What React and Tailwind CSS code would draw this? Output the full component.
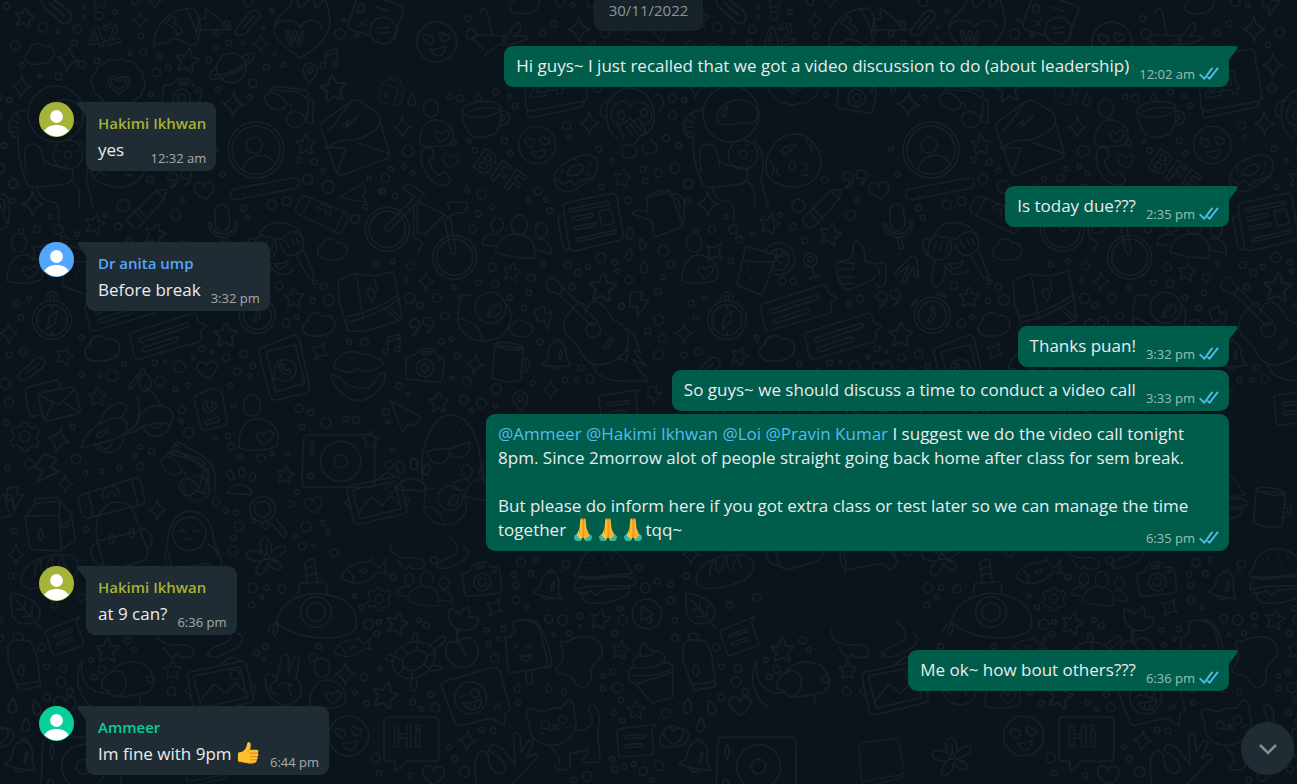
import { useState } from "react";

// line drawings of the wallpaper, each one centred on 0,0
const shapes = {
  star: "M0-30Q3-30 9-11L28-9Q31-6 14 6L18 27Q16 30 0 18L-18 28Q-21 27-14 6L-29-7Q-30-10-9-10Q-3-30 0-30Z",
  sparkle: "M0-34Q4-6 30 0Q6 5 0 34Q-5 6-30 0Q-6-5 0-34Z",
  heart: "M2 26C-40 4-34-26-14-26C-6-26-1-19 0-12C4-24 14-27 22-23C40-12 24 14 2 26Z",
  cloud: "M-26 30C-52 26-52-4-34-8C-34-34 0-40 8-22C32-32 48-6 38 8C34 28-6 34-26 30Z",
  drop: "M2-20Q16 0 10 12Q0 22-9 12Q-12 0 2-20Z",
  quotes: "M-28 22Q-12 12-14 0Q-34 4-36-12Q-32-26-18-24Q-2-20-4-2Q-8 16-24 24ZM18 16Q28 4 24-6Q6-2 4-16Q6-32 22-30Q38-28 36-8Q32 12 18 16Z",
  bolt: "M-24-30 8-34 4-10 26-10-6 36-6 6-26 8Z",
  camera:
    "M-56-30L-28-36L-20-50Q0-60 26-50L32-34L48-32Q60-28 58-12L52 36Q50 46 40 46L-50 38Q-60 36-58 24ZM-26 4a26 26 0 1 0 52 0a26 26 0 1 0-52 0M-12 4a12 12 0 1 0 24 0a12 12 0 1 0-24 0M-8-46L16-44L16-36L-10-38ZM38-20a5 5 0 1 0 10 0a5 5 0 1 0-10 0",
  people:
    "M-24-40a24 30 0 1 0 48 0a24 30 0 1 0-48 0M-72 42C-66-6-34-14-4-14C34-12 52 20 44 60Q-20 60-72 42ZM-84-40a18 22 0 1 0 36 0a18 22 0 1 0-36 0M-74 24L-112 18C-112-6-90-18-60-10M48-26a18 22 0 1 0 36 0a18 22 0 1 0-36 0M50 2C78-6 98 20 96 46L54 36",
  bell: "M-44 24Q-22 10-26-18C-20-56 24-56 28-16Q28 8 44 26Q0 34-44 24ZM-14 30Q0 48 14 30M-8-46a8 8 0 1 1 16 0M12-20Q20-8 12 10Q4 4 12-20",
  smiley:
    "M-60 0a60 60 0 1 0 120 0a60 60 0 1 0-120 0M-20 8Q-50-10-36-22Q-26-26-24-16Q-10-24-10-10Q-10 0-20 8ZM20 0Q0-20 12-28Q22-30 24-20Q38-28 40-16Q38-4 20 0ZM-18 22Q4 24 26 14Q22 44 2 42Q-12 40-18 22Z",
  gear: "M-8-42H8L12-30L24-24L36-30L44-14L34-4V8L42 16L34 32L20 28L12 34L8 44H-8L-12 32L-24 26L-36 30L-44 14L-34 6V-6L-42-14L-34-30L-22-26L-12-32ZM-16 0a16 16 0 1 0 32 0a16 16 0 1 0-32 0",
  message:
    "M-50-40Q-60-40-60-30V40Q-60 50-50 50H40Q50 50 50 40V-30L66-44ZM-34-16H26q6 5 0 10H-34q-6-5 0-10M-34 12H16q6 5 0 10H-34q-6-5 0-10",
  bubble:
    "M-70-66H70Q82-66 82-54V54Q82 66 70 66H-14L-48 96Q-50 80-50 66H-70Q-82 66-82 54V-54Q-82-66-70-66Z",
  chat: "M-110-30L90-50Q106-52 106-36V-20L130-2L106 12V30Q106 42 92 42L-100 56Q-114 54-114 42V-20Q-114-28-110-30ZM-84-8L70-24q8 6 0 14L-84 6q-8-8 0-14M-80 24L30 12q8 6 0 14L-80 38q-8-8 0-14",
  clock:
    "M-54 4a54 54 0 1 0 108 0a54 54 0 1 0-108 0M-42 4a42 42 0 1 0 84 0a42 42 0 1 0-84 0M-4-22V8L-16 20L-10 26L8 10L4-22ZM14-58Q24-76 42-50ZM-42-46Q-62-42-62-20Z",
  compass:
    "M-58 0a58 58 0 1 0 116 0a58 58 0 1 0-116 0M-46 0a46 46 0 1 0 92 0a46 46 0 1 0-92 0M-18-64a18 20 0 1 1 36 0M-7-66a7 7 0 1 0 14 0a7 7 0 1 0-14 0M14-28L10 8L-14 28L-8-8ZM0-44V-34M0 34V44M-44 0H-34M34 0H44",
  pin: "M0 30Q-24 2-22-12Q-18-30 0-30Q20-28 22-10Q20 6 0 30ZM-8-8a8 8 0 1 0 16 0a8 8 0 1 0-16 0",
  note: "M-18 24V-20L18-30V18M-18-8L18-18M-18 24a8 7 0 1 1-4-8M18 18a8 7 0 1 1-4-8",
  badge:
    "M-80 0Q-86-22-66-34Q-66-58-44-58Q-28-78-10-68Q10-82 26-66Q52-68 56-46Q80-36 74-12Q88 6 72 22Q70 46 48 48Q34 68 14 60Q-6 72-22 58Q-48 60-54 40Q-78 32-74 14ZM2 32Q-34 8-32-10Q-20-30 0-14Q26-30 34-8Q32 14 2 32ZM2 20Q-22 4-22-8Q-14-18 0-4Q20-18 24-6Q22 6 2 20Z",
  planet:
    "M-44 0a44 44 0 1 0 88 0a44 44 0 1 0-88 0M-42-6C-74 18-72 40-42 32C10 20 80-22 66-42C58-48 40-38 30-32M-54 20C-20 28 40-8 54-30",
  rocket:
    "M-62 60C-60-10-10-56 60-56C84-20 84 20 66 52C40 70 20 24-10 40C-30 60-50 44-62 60ZM34-54C54-24 66 6 70 34M-24-10Q-6-40 8-24Q-8-8 14-2Q36 16 8 26Q10 4-24-10Z",
  flame:
    "M0 76C-40 50-76 24-80-10C-82-60-20-60-26-110Q-6-100-4-74Q24-84 30-120Q44-100 42-76Q62-80 70-108C90-60 92-20 80 0C60 40 20 60 0 76ZM-78-16C-70-46-14-40 0-16C14-46 56-44 62-14",
  contact:
    "M-84 0a84 84 0 1 0 168 0a84 84 0 1 0-168 0M-72 0a72 72 0 1 0 144 0a72 72 0 1 0-144 0M-30-14a24 24 0 1 0 48 0a24 24 0 1 0-48 0M-38 56C-24 4 44 4 58 46",
  bar: "M-92 2L88-32Q104-30 104-14Q102-4 92 0L-84 34Q-100 34-102 20Q-102 6-92 2ZM-62 18v2M-36 12v2M-10 8v2M18 2v2",
  letter:
    "M-102-30Q-104-40-84-52L-14-104Q0-112 12-104L62-74Q74-66 74-54V-44L102 50Q104 62 94 68L-40 118Q-52 120-56 110L-102-20M-86-16L-68-28L-20-96M-88 38Q-60 10 0 12Q40 0 68-26L74-44M-90 34L-28 36L-54 112M8 20L100 52M-40-30L-20-48L-28-24L10-64",
  pencil: "M-54 28L26-50L56-54L50-24L-24 58Q-36 66-44 58L-56 46Q-64 38-54 28ZM26-50L50-24M-40 12L-12 44M-28 2L0 34",
  mic: "M-22-30Q-20-52-2-52Q18-50 20-28L24 4Q22 26 2 28Q-16 28-20 10ZM-40 4Q-40 44 4 48Q50 44 46-2M-34 4Q-30 36 4 38Q40 34 40-2M0 50L8 84L20 80L12 48",
  envelope:
    "M-44-22L50-40Q58-40 62-30L76 30Q78 40 68 42L-24 62Q-34 62-36 52L-50-10Q-52-20-44-22ZM-46-16L12 16L60-34M-30 56L-4 8M72 36L28 8M-50 46L-68 50Q-76 48-78 40L-90-26Q-90-36-80-38L0-60Q12-60 14-46V-36",
  phone:
    "M-66-62L26-98Q40-100 46-88L76 54Q76 70 64 76L-22 96Q-36 98-42 84L-76-46Q-76-58-66-62ZM-54-48L34-70L62 46L-24 72ZM-28 4a32 32 0 1 1 10 26L-30 36ZM-12-12Q-18 2-4 14Q10 24 22 12L14 4L6 8L-4-4L0-12Z",
  tag: "M-44-34L0-56L34-50L52 40Q52 50 44 54L-14 70Q-24 70-28 60L-48-24ZM-18-14Q-26 12-2 16Q22 8 18-14L8-18Q10 2-2 4Q-12 0-8-18ZM-12 40L24 28q8 8 2 14L-8 52q-10-4-4-12",
  buddy: "M-60 52C-62-24-16-42 14-30C54-22 66 20 54 48C30 62-34 66-60 52ZM-46-74a26 32 0 1 0 52 0a26 32 0 1 0-52 0M14 46Q-14 22-4 10Q6 2 16 16Q28-4 44 8Q48 26 14 46Z",
  clip: "M-36 20L10-22Q28-34 38-20Q46-8 34 2L-10 36Q-32 46-40 32Q-42 24-36 20ZM-16 20L22-10",
  scooter:
    "M-132 96C-120 50-90 26-30 8C6 4 14 24-2 56L-30 70L-130 98ZM-80 26C-56-30-26-48 0-32Q10-20-12 6M-14 60L30 34C40-10 70-34 110-28C146-22 150 4 134 26Q60 16 32 48ZM36-60C46-20 46 10 30 36M58-88C90-62 104-40 108-28M-94 84a46 46 0 0 0 88-20M-80 82a20 20 0 0 0 40-4M54 38a42 42 0 0 0 80-10M78 30a16 16 0 0 0 30-4M10-88L52-140Q58-140 60-130L22-84Q8-74 10-88ZM38-120Q62-134 76-108Q84-76 58-72Q36-84 38-120ZM-86 56L-54 42q8 4 2 10L-78 66q-10-2-8-10",
  bike: "M-166 8a66 66 0 1 0 132 0a66 66 0 1 0-132 0M-154 8a54 54 0 1 0 108 0a54 54 0 1 0-108 0M36 92a66 66 0 1 0 132 0a66 66 0 1 0-132 0M48 92a54 54 0 1 0 108 0a54 54 0 1 0-108 0M-108 2L-18-88L-50-112Q-52-130-30-126L12-98L-10-74L-94 12Q-108 16-108 2ZM-8-74L72-36L14 22L-10 18L-10-72M72-36L88-20M72-20L90 74Q100 90 106 76L88-34L112-42Q142-36 140-72Q118-78 80-72L86-52M-20-50L-22 26L6 50L-8 78",
  paper:
    "M-58-60L82-90Q94-92 98-80L118 34Q118 46 108 50L-24 82Q-42 84-44 70L-62-46Q-64-56-58-60ZM-62-24L-74-20Q-80-16-78-6L-62 72Q-56 84-44 76M-42-44L74-66q8 4 2 10L-40-34q-8-4-2-10M-34-18L24-30q6 4 0 10L-32-8q-8-4-2-10M-28 10L34-2q6 4 0 10L-26 20q-8-4-2-10M-22 46L94 20q6 4 0 10L-20 56q-8-4-2-10M44-36L80-44L92 0L54 8Z",
  map: "M-96-64L-48-84L14-78L70-92L96 44Q94 54 84 58L-16 88L-66 86L-92 0ZM-72 44Q0 36 86-22M-68 60Q0 50 90-10M42 18L82 54M52 12L90 46M-40-74L-20 50M14-70L22-34M0-12Q-16-28 0-42Q20-34 12-16L6 0Z",
  coffee:
    "M-72-60Q-60-76-28-68M-20-32a46 46 0 1 0 92 0a46 46 0 1 0-92 0M68-50C106-10 84 60 18 66C-36 74-70 36-74 4Q-66-4-46 6C-10 20-8 34 0 62M-72 0Q-72-50-62-66M16-4Q20-42 52-44Q66-20 42-6ZM16-6L44-36",
  mug: "M-46-48L40-40L32 58Q-16 68-54 48ZM-48-48Q-44-62 0-56Q46-48 40-36Q-10-30-48-48ZM36-6Q60-16 60 10Q56 34 32 32M38 4Q48 0 48 12Q44 22 34 22",
  guitar:
    "M-142-108Q-140-136-120-136L-92-108Q-90-90-106-86L-134-96ZM-106-88L-6 10Q10 6 12-4L-90-104M-22 22a22 22 0 1 0 44 0a22 22 0 1 0-44 0M-26-30C-6-84 32-64 58-10C110 10 116 50 92 92C40 140-20 140-40 80C-60 50-108 34-80-20L-60-44M-60-44Q-44-66-24-54M30 74L52 46q10 2 4 12L42 76q-10 8-12-2M92 18C128 20 130 60 140 90Q120 76 124 90L160 130Q140 120 116 110L164 176C130 170 60 190 10 150L-6 118M100 70Q110 90 96 116Q84 104 70 112",
  lips: "M-70-6C-60-50-20-66 16-48C50-50 70-30 82-22C70-4 40 6 20 4Q0-12-20 8Q-40 4-70-6ZM-78 14C-60 80-10 96 20 90C60 76 92 40 84 8Q70 6 58 30Q40 66-6 52Q-40 44-52 22Z",
  plane: "M-46-48L46 2L24 28L6 20L-10 48Z",
  ghost: "M-76 106C-90-20-40-96 6-98C60-96 90-40 96 30L110 106M-64 12Q-20 0 0 6L64-16Q68 24 40 30Q12 34 6 12Q-2 46-26 50Q-56 48-64 12ZM24-70v2M36-50v2M50-40v2",
  milk: "M-66-38L-42-72L32-78L66-40L78 40L30 70L-46 68Q-58 64-60 54L-72-30ZM-72-34L30-36L36 68M32-78L30-36M-42-72L-46-86L26-90L34-76M38-8L60-20V-8L40 4ZM-26 4Q-12 24-24 40Q-40 34-26 4",
  backpack:
    "M-76-16C-70-80-44-96-10-98C28-96 36-80 50-30L78 46Q84 70 60 80L-20 104Q-50 106-54 84L-74 10ZM-72 20L66-14M-34 0q-10 22 4 26q14-4 6-28ZM26-16q-10 22 4 26q14-4 6-28ZM-74 26Q-96 30-90 56Q-84 94-52 92M56-20Q84-20 92 10Q94 34 76 40",
  astronaut:
    "M-64-14C-60-72-28-98 6-96C54-92 70-50 74-8L98 54Q94 78 76 78L54 60L-52 80Q-76 70-72 30ZM-50-28a50 50 0 1 0 100 0a50 50 0 1 0-100 0M-30-34q8-10 18 0M10-34q8-10 18 0M-16-18q14 14 26 0M56 4Q80 10 86 40M-62 30Q-50 70-60 90",
  loupe: "M-40-6a38 38 0 1 0 76 0a38 38 0 1 0-76 0M-26-6a24 24 0 1 0 48 0a24 24 0 1 0-48 0M24 36L56 74Q70 80 70 64L40 24",
  flower:
    "M-10-10C-40-60 20-80 16-12C60-60 84-10 16 6C72 20 40 68 6 18C0 74-60 60-12 12C-76 20-72-40-10-10ZM-6 0a8 8 0 1 0 16 0a8 8 0 1 0-16 0M2-10V-34M12 6L32 18M-8 8L-24 24",
  leaf: "M-44-54C10-50 60-10 36 24C10 46-30 40-40 14Q-48-20-44-54ZM-30-36L44 50M-4-30V-8L-28-4M18-16V14L-12 16",
  bottle: "M-42-54Q-30-72-10-70L22-68Q42-40 44-20L56 64Q54 72 44 72L0 80Q-12 80-14 70L-42-10ZM-26-70V-86Q-10-96 4-84V-70M-4 0q20 24 4 38q-22-6-4-38M-12 64L54 54",
  photo:
    "M-92-46L64-78Q76-78 80-66L100 32Q100 44 90 46L-60 82Q-74 82-78 70L-98-30Q-100-42-92-46ZM-80-34L60-62L82 30L-56 62ZM-62 44L-18-10L18 18L46-14L78 16M32-38a14 14 0 1 0 28 0a14 14 0 1 0-28 0M0-68L34-92L64-78M-96 0L-106 10L-90 26M98-10L110 0L100 20",
  peace:
    "M-24 20L-6-58Q8-70 14-54L12-2L32-56Q46-62 46-46L36 10C60 30 60 80 10 88C-40 90-52 50-56 16Q-60-6-42-4Q-24 0-24 20ZM-16 30Q0 14 24 30L12 34L22 60M-30 20Q-60 50-20 56",
  puppy:
    "M-52 30C-80 36-76-10-40-24Q-10-34 0-10C10 20-10 50-28 50Q-46 46-52 30ZM-40-26C-10-66 60-60 74-28C100 0 84 40 50 40Q20 50-20 50M40-2v2M62-10Q90-16 82 6Q70 14 62-10ZM-50 40Q-140 40-130-56Q-150-20-140 20Q-130 60-100 80M46 42L42 76",
  submarine:
    "M-120 40C-100-30-50-40 0-46C90-40 130 0 120 60C80 104-60 96-120 40ZM-46 10a46 46 0 1 0 92 0a46 46 0 1 0-92 0M-28 10a28 28 0 1 0 56 0a28 28 0 1 0-56 0M-54-44L-48-76L24-80Q36-70 32-46M-26-80L-34-136Q-20-154-4-146L4-80M-34-120L-2-128M-30-100L0-106M-120 44Q-140 48-144 72M-116 44Q-110 66-124 84Q-138 70-116 44",
  fish: "M-70 20C-60-10-30-26 10-26L20-36L26-22Q40-14 44-8L66-36L58-4L70 10L40 4C14 40-40 48-70 20ZM-50 0Q-30 10-34 34M-14 4q14-14 22-4q-12 12-22 4",
  turtle:
    "M-64 14C-70-30-20-66 30-50C70-44 74 0 40 34C0 70-56 60-64 14ZM-34 6C-30-24 10-38 34-22C50 0 20 26-6 32C-26 32-36 20-34 6ZM-60-10L-34 0M-36-38L-20-20M10-54L8-32M60-20L36-12M44 24L26 10M-6 56L-6 34M-48 44L-28 22M-4-54V-76Q6-88 12-72V-54M48-44L84-72Q104-70 88-52L62-30M58 18Q90 14 82 30L50 32M-10 60V90Q4 98 8 84V58M-62 4L-84 0Q-88-16-66-16",
  plant:
    "M-8-30C-44-50-36-80-34-92Q-12-90-6-74Q4-92 24-96Q30-76 24-66Q44-70 54-60C50-30 20-20-8-30ZM-4-30Q-12-4-6 14M-10-30Q-16-4-10 6M-8 12C-50-16-60 60-14 80C30 96 60 60 50 20C40-10 6-10-4 10L14 48",
  icecream:
    "M-36-76Q24-96 44-50L66 40Q66 60 50 62L-40 76Q-50 76-52 64L-60-30Q-40-26-42-40Q-26-44-36-60ZM10-82C40-84 60-50 80 46Q80 60 60 62M2 74V104Q12 116 24 106L18 70M-36-10L-24-4L-34 4M14-8L2-4L16-2M-18 24Q0 30 18 22Q16 40 2 42Q-12 42-18 24",
  blob: "M-60-54Q-64-74-44-66C0-90 60-90 66-40C66-10 30-4 32 20C34 60 14 90-16 58C-24 20-70 40-74 14C-50-4-46-30-60-54Z",
  cupcake:
    "M-70 20C-76 0-66-8-54-10C-64-40-48-48-34-44Q-40-76-22-86Q-20-66 6-60C40-56 44-40 34-24Q66-28 62 0V80L0 96L-50 40Q-66 36-70 20ZM-34-44Q0-40 8-58M-54-8Q20-8 34-28M-48 40Q0 26 62 4M-66 14Q10 20 56-4",
  wink: "M-88-46L54-88Q70-90 76-76L106 34Q108 46 92 48L88 86L50 64L-40 86Q-56 88-60 74L-100-30Q-102-40-88-46ZM-60 4a48 48 0 1 0 96 0a48 48 0 1 0-96 0M-42 2q10-12 20-4M-12-10a13 13 0 1 0 26 0a13 13 0 1 0-26 0M-34 20Q0 20 20 4Q24 34-4 40Q-26 38-34 20ZM-14 20V32M0 18V32M58 42L68 22M70 38L80 18",
  hand: "M-70 116C-90 50-80-6-56-4Q-42 0-40 14C-40 50-20 74 4 60C20 36-10 10-40-4Q-36-34 0-12L40 40L34-48Q42-66 54-50L58 0L80-34Q96-40 92-22L72 18L96 6Q112 8 102 20L18 110",
  cat: "M-100-20C-120-50-110-70-90-62L-60-54Q-30-70-6-66L10-86Q30-100 34-50C50 0 20 40-30 46C-80 46-104 20-100-20ZM-66-14a12 12 0 1 0 24 0a12 12 0 1 0-24 0M-14-30a12 12 0 1 0 24 0a12 12 0 1 0-24 0M-26-6L-16-14L-32-14ZM-26-6Q-34 6-42-2M-26-6Q-16 4-10-6M-70 12H-58M10-8L24-14M38 0C80 4 100-20 78-56Q72-76 90-76C120-50 100 0 104 30Q116 90 104 96L66 98Q50 88 68 80L76 60L20 70V110Q10 124-24 118Q-30 100-10 100L-16 76L-40 48",
  burger:
    "M-76-28C-70-70-40-92 0-90C40-90 66-60 74-34L88-20Q80-10 60-14Q-40 0-86-8Q-88-24-76-28ZM-70-4C-20 14 30-20 90 0Q110 14 80 22Q-50 18-84 34Q-90 14-70-4M-76 40Q-60 50-40 36L-20 50L0 34L80 28Q80 50 60 56Q0 80-46 72Q-66 66-66 46M-30-66v6M0-76v4M28-66v6M-46-48h6M10-48v5M44-46h4",
  cursor: "M-44 0a44 44 0 1 0 88 0a44 44 0 1 0-88 0M-16-26L20 2L8 6L16 22L6 28L-4 10L-18 20Z",
  bread: "M-96 20C-80-50 40-70 80-46C110-20 90 20 50 34C0 54-60 66-84 50Q-98 40-96 20ZM-50 16Q-50-30-30-40Q-36-10-20 4M-10 0Q-10-40 8-48Q4-20 18-4M26-8Q30-44 46-50Q44-26 54-12",
  arms: "M-130-30C-136 0-100 20-60 14C-20 16-10 30-24 50Q-60 60-70 40L-80 56Q-100 40-110 20M24 52C20 20 60 20 90 0Q100-30 60-60M20 40Q40 60 70 44L110 24Q146-10 110-20",
  calc: "M-60-86L50-46Q64-40 60-26L30 50M-60-86Q-72-88-76-76L-106 10Q-108 22-96 28L-40 44M-40 30a40 40 0 1 0 80 0a40 40 0 1 0-80 0M-16 24L16 20M-14 38L18 34M-76-44L-60-50L-56-30L-76-24ZM-20-40L16-28M-72 0L-52 16M-50-4L-72 20",
  sprout: "M-70-30Q-60-60-48-34L-34 34Q0 44 20 30Q30-4 50 0Q60 20 30 40Q70 34 76 44Q40 66-10 62L-56 96M-34 36Q-70 30-96 44L-60 76",
  calendar:
    "M-92-86L56-108Q70-110 72-96L96 30Q98 44 84 48L-70 76Q-84 78-88 66L-96-70Q-96-82-92-86ZM-84 72L-82 92Q-78 100-66 96L76 66Q88 60 84 46",
  cup: "M-64-34Q-60-56 0-62Q50-60 52-44Q48-20-10-14Q-56-12-64-34C-64 10-40 40-26 46Q0 50 38 34Q56 0 52-44M54-34Q84-32 78-6Q72 12 46 8M56-20Q66-20 64-10Q58 0 50-4M-44-30Q0-50 44-40",
  donut:
    "M-66 26C-66-10-30-36 20-50C60-54 76-30 60 8C50 30 10 40 0 54C-20 64-50 60-58 44ZM-28 6Q-14-22 16-22Q32-14 14 4Q-14 20-28 6ZM-66 26Q-56 20-48 30Q-36 44-28 32Q-14 24-8 38Q0 46 10 28Q40 24 60 8M-44 2l6-8M-4-38l8 4M40-28l6 6M30 10l8-6",
  monkey:
    "M-74 4C-84-60-30-92 10-84C60-74 76-20 66 24Q50 60 22 56M-60-6C-60-44-18-60-2-30C24-60 66-34 60 6Q54 20 40 24M-60-6Q-64 14-40 22M-74 6Q-96 0-92-26Q-84-50-60-48M66-60Q90-80 96-44Q92-20 78-14M-74 4Q-70 50-40 66M-40-4a10 12 0 1 0 20 0a10 12 0 1 0-20 0M28-12a10 12 0 1 0 20 0a10 12 0 1 0-20 0M-40 28L-28 20L-14 14L-4 4L4 14L24 8L44 44Q26 60 10 80M-40 28L-24 60M-4 20L16 50M6 16L30 40M-14 30L4 56M-24 120Q-40 90-10 84Q10 84 18 100Q16 124-6 124Q-20 124-24 120M34 86Q30 110 56 112Q82 106 76 84L56 68",
  spaceman:
    "M-84-80a84 84 0 1 0 168 0a84 84 0 1 0-168 0M-44-64C-40-116 20-136 62-112C90-90 84-60 60-52C20-60 0-40-30-50Q-42-54-44-64ZM-26-72Q-26-96-12-104Q-6-96-16-78Q-22-66-26-72M-84-92Q-140-90-142-40Q-140-10-112-8M-118-80L-108-66M-130-62L-112-54M-136-42L-116-40M-136-24L-116-28M-112-20Q-120 50-90 120Q-86 144-54 140L30 130Q56 124 48 84L-10 74L-36 60M-90 90C-100 20-92 10-64 10Q-40 16-34 76M-8 42a44 44 0 1 0 88 0a44 44 0 1 0-88 0M24 42a12 12 0 1 0 24 0a12 12 0 1 0-24 0M6 30v3M24 12v3M48 12v3M64 30v3M60 56v3M12 58v3M34 70v3M-56 140Q-54 180 0 186Q14 210 8 240M48 124Q76 130 70 200M70 0Q110 44 90 116L112 200",
  cookie: "M-84 20C-86-40-40-80 8-80C50-76 88-30 80 20C70 60 40 76 0 80C-50 76-84 60-84 20ZM-40-30Q-20-52 8-46Q-4-32-30-18ZM-14 10q10-14 18-2q0 16-12 20Q-18 20-14 10M30 10q8-8 8 6t-8 12M-50 20q-8 18 10 26M50-40q8 10 2 18M20 40q10 8 22 2M-70 0q20 24 4 44M40-70q-10 20 10 24",
  call: "M-44-50Q-30-66-14-52L-10-30L-24-18Q-20 10 4 26L20 14L40 36Q40 50 20 58C-30 50-60-10-44-50Z",
  thumb:
    "M-46-14Q-60-16-58-2Q-54 8-50 8Q-62 22-48 32Q-54 48-38 52Q-40 72-16 68L30 50Q56 40 64 26M-46-14L-20-22Q0-40-6-66Q6-88 24-60Q32-30 28-20L62-6Q70-2 74 30M-50 8L-4 8M-48 32L-6 32M-38 52L-2 50M66-10L90-12Q98 20 88 56Q74 70 62 54M-46-14L-4-10L-6 4",
  facepalm:
    "M-56-24C-50-70 40-80 70-24M-92 10Q-96-16-72-14M-92 10Q-90 30-70 40M-70-10Q-50-34-40-18L-26-20Q-4-10-6 14Q-10 46-44 50Q-84 50-76 10ZM-10-16L10-12Q30-40 54-34Q80-20 74 10Q60 40 30 36Q6 20 4 0M-50-6L-60 18M-34-6L-40 22M-18 0L-22 26M20-8L34 14M38-14L50 8M54-14L62 2M-14 60Q10 66 30 50Q20 78 4 76Q-10 74-14 60ZM-56 48L-66 110Q-60 136-44 128Q-26 116-24 60M54 40L90 104Q110 110 104 90L74 20M-24 70Q4 110 46 80",
  arrowUp: "M-36 16L0-36Q10-44 18-36L34 18Q30 26 22 16L12-8L-2 44Q-12 50-12 40L0-10L-28 22Q-38 26-36 16Z",
  drink: "M-48-62L44-34L4 78Q0 84-8 82L-70 58Q-76 54-72 44ZM-62-16L34-14M10-48a48 48 0 1 1 24 70M22-36a32 32 0 1 1 14 44M44-54V-20M60-8L40-24L72-34M40-20L66-44M-40 0v3M-20 10v3M0 0v3M-32 34v3",
  monocle: "M-20-20a20 20 0 1 0 40 0a20 20 0 1 0-40 0M-8-22a8 8 0 1 0 16 0a8 8 0 1 0-16 0M6 2L12 30M-2 36L28 26",
  glasses:
    "M-70-12C-70-46-10-30-6 6C-20 30-60 20-70-12ZM-4 46C0 14 40 20 54 46C40 84 0 80-4 46ZM-6 0Q10 0 10 18M-58-34Q-50-54-20-50L50-40Q70-30 56-16L24-36L-48-40M56 46L62-10Q78-22 76 0L74 60L54 56",
  teapot: "M-50-46L20-66L60 40L-26 72Q-30 50-38 20L-90 4Q-96-8-70-10L-46-4ZM-50-46Q-30-66-10-66Q10-76 20-66M22-56Q60-70 64-20L60 30M34-44Q50-50 50-10",
  disc: "M-90-80H100Q112-78 112-66V66Q110 78 98 78H-96Q-106 76-106 60L-102-60Q-100-80-90-80ZM-50 0a60 60 0 1 0 120 0a60 60 0 1 0-120 0M-10 0a20 20 0 1 0 40 0a20 20 0 1 0-40 0M-76-60Q-66-44-76-20Q-88-40-76-60M-88 44a8 8 0 1 0 16 0a8 8 0 1 0-16 0",
  roll: "M-90-10L70-60Q84-62 90-44L100 0Q102 14 90 20L-70 60Q-84 62-90 44L-98 10Q-98-4-90-10ZM-70-16Q-60 20-54 56M60-56Q70-20 80 22M-24 0a26 26 0 1 1 50-10M-12 2a14 14 0 1 1 26-6",
  paw: "M-44 40Q-30 10 0 14Q34 20 30 44ZM-34 0q-16-20-4-30q16 4 16 26ZM-4-10q-8-24 6-28q14 8 6 28ZM24 0q0-24 14-22q10 14-4 26Z",
  stick: "M-56-30Q-62-44-44-44L30 0Q62 20 66 60L64 110M-50-18L20 22Q44 36 46 66V110",
};

// [shape, x, y, scale, rotation]
const marks = [
  ["star", 74, 52, 1, 10], ["star", 300, 4, 0.8, 0], ["star", 562, 182, 1.2, 10], ["star", 918, 433, 1, 0],
  ["star", 284, 672, 1, 12], ["star", 466, 702, 1.1, 14], ["star", 1000, 265, 1.3, -8],
  ["sparkle", 205, 177, 1.1, 10], ["sparkle", 64, 260, 1, 4], ["sparkle", 420, 62, 0.7, 0], ["sparkle", 782, 130, 0.8, 0],
  ["sparkle", 700, 313, 1.1, 4], ["sparkle", 98, 612, 1.1, 0], ["sparkle", 465, 0, 0.8, 0],
  ["cloud", 122, 162, 1, 0], ["badge", 355, 250, 1, 0], ["camera", 545, 290, 1, 4], ["planet", 694, 204, 1, 0],
  ["rocket", 522, 80, 1, 0], ["plane", 632, 70, 1, 150], ["flame", 902, 98, 1, 0], ["contact", 768, 450, 1, 0],
  ["bar", 794, 565, 1, 0], ["clip", 741, 62, 1, -10], ["clip", 176, 24, 1.2, 80], ["pin", 930, 220, 1, 8],
  ["note", 994, 175, 1, 0], ["glasses", 864, 310, 1, 0], ["pencil", 442, 622, 1, 0], ["mic", 666, 664, 1, 0],
  ["quotes", 538, 540, 1, 0], ["heart", 613, 572, 1, -8], ["facepalm", 836, 730, 1, 0], ["roll", 966, 640, 0.8, 40],
  ["calc", 1150, 62, 1, 0], ["smiley", 1310, 126, 1, 0], ["sprout", 1510, 70, 1, 0], ["cloud", 1576, 10, 1, 0],
  ["sparkle", 1737, 88, 1.1, 0], ["sparkle", 1793, 195, 1, 0], ["sparkle", 1768, 370, 1, 0], ["sparkle", 1207, 382, 0.9, 0],
  ["letter", 1066, 408, 1, 0], ["milk", 1174, 278, 0.5, 20], ["drop", 1234, 300, 1, 0], ["drop", 1434, 292, 0.7, 0],
  ["buddy", 1310, 388, 0.85, 0], ["call", 1312, 500, 1, 0], ["heart", 1352, 484, 0.8, 0], ["cup", 1450, 366, 1, 0],
  ["calendar", 1666, 256, 1, 0], ["smiley", 1612, 435, 0.93, 0], ["donut", 1728, 515, 1, 0], ["monkey", 1894, 350, 1, 0],
  ["spaceman", 2193, 422, 1, 0], ["cookie", 357, 482, 1, 0], ["star", 1868, 534, 0.9, 10], ["bolt", 1788, 12, 1, 0],
  ["letter", 1944, 60, 0.7, 30], ["star", 1990, 190, 1, 0],
  ["buddy", 75, 795, 0.9, 0], ["sparkle", 118, 756, 1, 40], ["drink", 260, 800, 1, 0], ["monocle", 406, 800, 1, 0],
  ["thumb", 540, 800, 1, 0], ["arrowUp", 700, 806, 1, 10], ["cloud", 1000, 750, 1, 10],
  ["compass", 156, 960, 1, 0], ["chat", 366, 920, 0.95, -12], ["chat", 500, 1005, 0.95, -12], ["cloud", 310, 1046, 1.2, 0],
  ["quotes", 640, 900, 1, 0], ["clock", 772, 942, 1, 0], ["star", 882, 892, 1, 0], ["star", 678, 1004, 1.2, 0],
  ["cloud", 960, 974, 1.1, 0], ["sparkle", 26, 1000, 0.9, 0], ["star", 194, 1068, 0.9, 20], ["clip", 94, 1100, 1, 0],
  ["heart", 622, 1110, 1, -8], ["phone", 852, 1104, 1, 0], ["sparkle", 960, 1054, 0.9, 30], ["envelope", 165, 1200, 1, 0],
  ["star", 292, 1190, 0.9, 0], ["scooter", 376, 1246, 1, 0], ["tag", 630, 1222, 1, 0], ["buddy", 776, 1290, 1, 0],
  ["gear", 75, 1310, 1, 0], ["sparkle", 176, 1320, 1.1, 14], ["disc", 1012, 1384, 1, 0], ["bolt", 140, 1410, 1.3, 30],
  ["glasses", 550, 1410, 1, 10], ["stick", 580, 1370, 1, 0], ["paw", 724, 1440, 1, 0], ["star", 856, 1424, 0.9, 8],
  ["plane", 1070, 580, 0.8, -60], ["bike", 1262, 680, 1, 0], ["people", 1558, 715, 1, 0], ["paper", 1752, 670, 1, 0],
  ["teapot", 1990, 640, 1, 0], ["drop", 1888, 700, 1, 0], ["drop", 1926, 734, 0.9, -20], ["drop", 1886, 764, 1, 10],
  ["drop", 1930, 802, 1, 0], ["map", 1110, 906, 1, 0], ["sparkle", 1278, 844, 0.8, 0], ["star", 1536, 816, 0.9, 10],
  ["coffee", 1446, 955, 1, 0], ["quotes", 1264, 982, 1, 0], ["bolt", 1636, 952, 1, -20], ["star", 1808, 862, 1.4, 4],
  ["bolt", 1918, 912, 1.1, 0], ["guitar", 1780, 968, 1, 0], ["cloud", 1566, 986, 0.8, 10], ["note", 1182, 1032, 1, 0],
  ["lips", 1070, 1110, 1, 0], ["camera", 1275, 1100, 1, 0], ["sparkle", 1425, 1092, 0.9, 8], ["mug", 1530, 1084, 1, 0],
  ["bell", 1670, 1070, 1, 0], ["sparkle", 1652, 1170, 0.8, 0], ["pin", 1562, 1204, 1, -8], ["star", 1316, 1206, 1, 0],
  ["plane", 1218, 1250, 1, 0], ["ghost", 1344, 1342, 1, 0], ["star", 1112, 1320, 0.9, 0], ["message", 1860, 1220, 1, -6],
  ["bolt", 1964, 1186, 0.8, 0], ["paw", 1240, 1420, 1.2, 0],
  ["bolt", 46, 1494, 1, 0], ["sparkle", 196, 1452, 0.8, 0], ["roll", 334, 1494, 1, 0], ["contact", 590, 1465, 0.5, 0],
  ["loupe", 790, 1534, 1, 0], ["heart", 940, 1516, 0.9, -10], ["milk", 148, 1582, 1, 0], ["backpack", 364, 1604, 1, 0],
  ["sparkle", 472, 1530, 0.9, 0], ["astronaut", 568, 1630, 1, 0], ["flower", 798, 1670, 1, 0], ["sparkle", 48, 1664, 0.9, 0],
  ["bread", 150, 1714, 0.9, 0], ["leaf", 78, 1834, 1, 0], ["message", 196, 1908, 0.9, -20], ["star", 322, 1950, 1.2, 0],
  ["arms", 600, 1920, 1, 0], ["submarine", 948, 1826, 1, 0], ["bottle", 66, 1990, 1, 0], ["puppy", 376, 2040, 1, 0],
  ["star", 518, 2010, 0.9, 0], ["photo", 660, 2062, 1, 0], ["peace", 852, 2026, 1, 0], ["buddy", 984, 2070, 0.9, 0],
  ["drop", 36, 2118, 1.2, 0], ["drop", 108, 2124, 1.2, -20], ["drop", 76, 2176, 1.1, 0], ["bell", 64, 2274, 1.1, 10],
  ["heart", 194, 2118, 1.1, 0], ["disc", 240, 2300, 1.1, 0], ["cloud", 0, 2210, 1, 0],
  ["fish", 1094, 1712, 1, 0], ["arms", 1290, 1660, 0.9, 0], ["camera", 1446, 1742, 1, -12], ["gear", 1137, 1796, 0.8, 0],
  ["people", 1280, 1770, 0.8, 0], ["bell", 1646, 1762, 1, 12], ["burger", 1810, 1736, 1, 0], ["cursor", 1941, 1842, 1, 0],
  ["star", 1192, 1870, 1.1, 14], ["sparkle", 1484, 1822, 0.9, 30], ["star", 1800, 1858, 1, 10], ["turtle", 1242, 1980, 1, 0],
  ["plant", 1382, 1918, 1, 0], ["icecream", 1576, 1942, 1, 0], ["blob", 1742, 1992, 1, 0], ["star", 1862, 1950, 0.9, 10],
  ["cupcake", 1956, 2012, 1, 0], ["fish", 1060, 1940, 0.8, 0], ["sparkle", 1036, 2022, 1, 0], ["star", 1156, 2086, 1.3, 14],
  ["wink", 1424, 2090, 1, 0], ["smiley", 1046, 2208, 1, 0], ["bubble", 1234, 2218, 1, 0], ["sparkle", 1402, 2222, 0.9, 6],
  ["hand", 1506, 2256, 1, 0], ["cat", 1690, 2190, 1, 0], ["message", 1910, 2220, 0.95, -4], ["star", 1908, 2130, 0.9, 0],
  ["heart", 2020, 2208, 1, 0], ["heart", 1300, 2326, 1.1, 0], ["drop", 1552, 2064, 0.8, 10], ["drop", 1644, 2064, 0.8, -20],
  ["drop", 1692, 2076, 0.7, -20], ["roll", 1990, 1530, 0.8, 0], ["photo", 1130, 1500, 0.9, 0], ["bread", 1690, 1714, 0.1, 0],
  ["people", 1460, 1450, 0.9, 0], ["burger", 1630, 1500, 0.9, 0], ["mug", 1790, 1520, 1, 0],
  ["coffee", 1330, 1520, 0.8, 0], ["calendar", 620, 2290, 0.7, 0], ["flower", 830, 2270, 1, 0],
];

// x, y, radius of every small ring
const rings = [
  20, 18, 10, 128, 82, 14, 174, 94, 6, 232, 88, 12, 297, 47, 12, 250, 22, 5, 250, 50, 5, 345, 35, 7, 405, 5, 10,
  223, 129, 8, 46, 137, 14, 291, 183, 8, 245, 193, 11, 430, 154, 10, 390, 160, 6, 422, 108, 9, 478, 170, 7,
  469, 217, 13, 505, 204, 8, 66, 196, 7, 119, 227, 6, 176, 230, 10, 28, 300, 8, 12, 437, 8, 40, 552, 14, 38, 602, 8,
  151, 650, 7, 63, 694, 8, 111, 688, 10, 175, 688, 14, 232, 702, 7, 314, 645, 7, 354, 680, 10, 370, 617, 19,
  450, 538, 10, 547, 601, 7, 527, 645, 15, 453, 283, 7, 627, 180, 8, 654, 269, 7, 680, 72, 10, 649, 100, 8,
  686, 129, 8, 648, 144, 5, 730, 129, 5, 745, 5, 14, 790, 82, 5, 816, 33, 7, 824, 162, 5, 799, 202, 9, 850, 195, 7,
  759, 250, 12, 749, 292, 7, 895, 480, 8, 943, 486, 9, 970, 511, 7, 923, 538, 15, 668, 523, 7, 648, 448, 7,
  730, 625, 9, 743, 653, 7, 815, 614, 14, 860, 604, 13, 1019, 102, 15, 1071, 106, 6, 1032, 61, 6, 1403, 56, 9,
  1414, 102, 15, 1514, 120, 6, 1663, 71, 9, 1718, 15, 7, 1627, 99, 10, 1778, 134, 8, 1814, 98, 14,
  1681, 5, 14, 1350, 290, 8, 1380, 295, 11, 1487, 276, 9, 1527, 289, 6, 1545, 318, 8, 1700, 377, 12, 1708, 411, 6,
  1797, 447, 9, 1791, 265, 12, 1224, 454, 17, 1173, 507, 7, 1213, 499, 7, 1238, 521, 7, 1107, 535, 7, 1156, 534, 12,
  1360, 429, 9, 1407, 424, 6, 1424, 451, 8, 1513, 422, 9, 1531, 460, 7, 985, 560, 18, 2018, 293, 12, 2053, 300, 7,
  2018, 346, 12, 1998, 414, 10, 2037, 437, 9, 1834, 482, 6, 1929, 507, 9, 1975, 519, 12, 2025, 505, 15, 1936, 543, 8,
  2066, 551, 14, 1805, 560, 7, 1614, 574, 12, 1145, 574, 9, 192, 718, 10, 168, 783, 8,
  389, 722, 9, 322, 843, 11, 355, 845, 10, 49, 910, 9, 88, 895, 7, 62, 953, 8, 245, 1013, 7, 521, 912, 7, 556, 897, 11,
  837, 858, 12, 944, 846, 7, 970, 860, 10, 938, 902, 8, 987, 900, 16, 890, 951, 7, 859, 970, 12, 70, 1055, 11,
  27, 1065, 9, 373, 1091, 7, 464, 1088, 8, 495, 1085, 4, 538, 1100, 17, 606, 1046, 9, 580, 1072, 6, 634, 1056, 4,
  679, 1073, 11, 731, 1062, 12, 711, 1114, 11, 758, 1098, 8, 750, 1129, 7, 245, 1124, 7, 298, 1125, 6, 336, 1128, 17,
  480, 1145, 15, 526, 1167, 7, 563, 1156, 7, 15, 1151, 16, 27, 1206, 13, 18, 1269, 8, 217, 1281, 8, 546, 1229, 11,
  545, 1265, 7, 566, 1298, 15, 690, 1157, 7, 702, 1217, 7, 683, 1307, 8, 644, 1315, 6, 693, 1340, 11, 898, 1225, 12,
  933, 1238, 9, 978, 1269, 15, 907, 1281, 8, 719, 1369, 8, 783, 1374, 12, 815, 1361, 6, 862, 1362, 6, 419, 1340, 7,
  455, 1354, 9, 527, 1343, 9, 405, 1366, 7, 228, 1376, 14, 87, 1392, 14, 256, 1420, 7, 304, 1414, 7, 358, 1403, 7,
  421, 1400, 11, 22, 1404, 8, 1149, 575, 7, 1186, 587, 8, 1445, 583, 14, 1402, 571, 7, 1434, 641, 9, 1418, 687, 11,
  1095, 621, 8, 1066, 657, 13, 1477, 620, 7, 1586, 600, 6, 1649, 632, 9, 1637, 599, 7, 1885, 601, 10, 1803, 773, 15,
  1477, 802, 12, 1629, 793, 7, 1703, 795, 10, 1734, 818, 10, 1763, 800, 7, 1845, 786, 8, 1850, 813, 6, 1990, 752, 16,
  2012, 793, 11, 1988, 831, 7, 1886, 840, 12, 1232, 798, 12, 1178, 784, 7, 1128, 793, 8, 1219, 841, 6, 1229, 895, 15,
  1311, 894, 13, 1261, 916, 9, 1334, 948, 12, 1362, 862, 7, 1435, 848, 8, 1485, 850, 11, 1594, 834, 12, 1587, 878, 8,
  1529, 893, 8, 1571, 923, 8, 1715, 861, 9, 1865, 919, 9, 1974, 874, 10, 1976, 960, 15, 1943, 993, 9, 1987, 1015, 12,
  1975, 1065, 15, 1620, 1026, 9, 1743, 1103, 9, 1770, 1137, 12, 1730, 1141, 7, 1694, 1140, 8, 1598, 1148, 7,
  1489, 1167, 15, 1486, 1217, 7, 1445, 1210, 15, 1391, 1199, 13, 1412, 1232, 6, 1400, 1145, 13, 1356, 1135, 6,
  1372, 1069, 9, 1325, 1025, 8, 1354, 1017, 7, 1093, 1026, 12, 1047, 1025, 7, 1197, 1158, 10, 1224, 1184, 6,
  1038, 1257, 8, 1069, 1260, 10, 1158, 1236, 10, 1165, 1265, 6, 1177, 1350, 7, 1167, 1395, 12, 42, 1593, 8,
  33, 1728, 9, 649, 1506, 11, 677, 1532, 7, 708, 1539, 8, 717, 1580, 14, 761, 1562, 7, 796, 1575, 11, 699, 1653, 14,
  700, 1612, 8, 873, 1512, 10, 892, 1475, 7, 918, 1580, 15, 968, 1568, 7, 907, 1638, 11, 888, 1611, 6, 939, 1635, 4,
  984, 1597, 7, 1003, 1659, 12, 758, 1764, 14, 799, 1763, 8, 846, 1767, 12, 786, 1790, 6, 755, 1815, 9, 258, 1587, 8,
  164, 1815, 10, 245, 1793, 12, 124, 1942, 11, 140, 2000, 8, 189, 2006, 11, 183, 2046, 15, 210, 2075, 10,
  273, 1979, 7, 306, 2009, 11, 283, 2031, 8, 384, 1921, 11, 402, 1949, 7, 515, 2075, 13, 770, 1960, 9, 797, 1940, 9,
  791, 1977, 6, 957, 1940, 8, 939, 1973, 12, 140, 2093, 10, 1303, 1681, 10, 1180, 1730, 9, 1063, 1789, 6, 1086, 1822, 8,
  1106, 1873, 15, 1137, 1866, 7, 1130, 1902, 8, 1258, 1861, 7, 1279, 1877, 9, 1140, 2007, 6, 1093, 2031, 11,
  1065, 2078, 7, 1099, 2110, 8, 1238, 2106, 8, 1294, 2083, 9, 1264, 2127, 7, 1307, 2123, 13, 1460, 1890, 7,
  1511, 1887, 8, 1497, 1916, 6, 1466, 1934, 7, 1484, 1975, 12, 1542, 1724, 8, 1592, 1721, 8, 1547, 1756, 9,
  1549, 1800, 11, 1582, 1823, 5, 1563, 1687, 13, 1607, 1679, 7, 1699, 1692, 12, 1646, 1857, 12, 1688, 1860, 15,
  1738, 1848, 9, 1740, 1879, 5, 1707, 1900, 7, 1662, 1904, 5, 1860, 1825, 8, 1869, 1860, 14, 1843, 1900, 9,
  1917, 1703, 9, 1972, 1744, 9, 2011, 1753, 8, 1936, 1764, 14, 2013, 1802, 11, 2025, 1861, 8, 2025, 1914, 10,
  1839, 2015, 9, 1810, 2028, 6, 1852, 2063, 15, 1809, 2065, 8, 1863, 2099, 8, 1841, 2138, 8, 1868, 2162, 7,
  1998, 2140, 14, 1554, 2108, 7, 1446, 2190, 8, 1479, 2192, 9, 1348, 2242, 7, 1364, 2277, 9, 1127, 2274, 14,
  1137, 2320, 8, 1231, 2327, 8, 1394, 2315, 15, 1722, 2340, 8, 1762, 2329, 14, 1837, 2277, 8, 1845, 2308, 10,
  1873, 2300, 8, 1901, 2293, 7, 1930, 2314, 12, 1977, 2297, 14, 1957, 2340, 7,
];

const letters = [
  { text: "42", x: 272, y: 148, turn: -14, size: 84 },
  { text: "W", x: 856, y: 134, turn: 2, size: 58 },
  { text: "BFF", x: 1412, y: 496, turn: 34, size: 92 },
  { text: "24", x: 1588, y: 294, turn: -8, size: 96 },
  { text: "Hi", x: 1176, y: 2242, turn: 0, size: 84 },
];

const green = "#a5b337";
const blue = "#53a6fd";
const teal = "#06cf9c";

const groups = [
  { mine: true, messages: [{ text: "Hi guys~ I just recalled that we got a video discussion to do (about leadership)", time: "12:02 am" }] },
  { name: "Hakimi Ikhwan", color: green, messages: [{ text: "yes", time: "12:32 am" }] },
  { mine: true, messages: [{ text: "Is today due???", time: "2:35 pm" }] },
  { name: "Dr anita ump", color: blue, messages: [{ text: "Before break", time: "3:32 pm" }] },
  {
    mine: true,
    messages: [
      { text: "Thanks puan!", time: "3:32 pm" },
      { text: "So guys~ we should discuss a time to conduct a video call", time: "3:33 pm" },
      {
        long: true,
        time: "6:35 pm",
        text: (
          <>
            <Mention name="Ammeer" /> <Mention name="Hakimi Ikhwan" /> <Mention name="Loi" />{" "}
            <Mention name="Pravin Kumar" /> I suggest we do the video call tonight
            <br />
            8pm. Since 2morrow alot of people straight going back home after class for sem break.
            <br />
            <br />
            But please do inform here if you got extra class or test later so we can manage the time
            <br />
            together <Pray />
            <Pray />
            <Pray />
            tqq~
          </>
        ),
      },
    ],
  },
  { name: "Hakimi Ikhwan", color: green, messages: [{ text: "at 9 can?", time: "6:36 pm" }] },
  { mine: true, messages: [{ text: "Me ok~ how bout others???", time: "6:36 pm" }] },
  {
    name: "Ammeer",
    color: teal,
    messages: [{ text: <>Im fine with 9pm <ThumbsUp /></>, time: "6:44 pm" }],
  },
];

function Mention({ name }) {
  return (
    <a href="#" className="text-[#53bdeb]">
      @{name}
    </a>
  );
}

function Pray() {
  return (
    <svg role="img" aria-label="folded hands" viewBox="0 0 25 25" className="inline-block w-[25px] h-[25px] -mt-1">
      <path d="M3 19l4-3 4 5-1 3H6c-2 0-3-2-3-5z" fill="#2fb8a6" />
      <path d="M21 19l-4-3-4 5 1 3h4c2 0 3-2 3-5z" fill="#2fb8a6" />
      <path d="M9.3 2.5C9.5 1 12 1 12 3v17l-2 2.5-4.5-4L8.5 11z" fill="#fdbf3a" />
      <path d="M14.7 2.5C14.5 1 12 1 12 3v17l2 2.5 4.5-4L15.5 11z" fill="#fbb02b" />
      <path d="M12 3v17M9.2 10l-1 6" stroke="#d97f12" strokeWidth="0.8" fill="none" />
      <path d="M9.3 2.5Q10.5 0.5 12 2.5Q13.5 0.5 14.7 2.5" stroke="#c8691a" strokeWidth="1" fill="none" />
    </svg>
  );
}

function ThumbsUp() {
  return (
    <svg role="img" aria-label="thumbs up" viewBox="0 0 25 25" className="inline-block w-6 h-6 -mt-1">
      <path
        d="M2 14c0-2 1.500-2.500 3-2.500 3 0 5-3.500 6-6C11.600 3.500 11.500 1 13 1c2.500 0 3 3.500 1.500 8h7c2.300 0 2.300 3 .8 3.500 1.700.8 1.300 3.300-.3 3.700 1.200 1 .8 3-.7 3.400.8 1.400 0 3-2 3.300-4 .6-8 .6-11-.4-1.500-.5-3-.5-4.300-.5-2 0-2-2-2-3.500z"
        fill="#fdc02f"
      />
      <path d="M14.5 12.6h7.500M14.3 16.2h7.500M14.5 19.7h6.500" stroke="#d98314" strokeWidth="0.9" fill="none" />
      <path d="M14.5 9c-1.500.3-2.500 1.500-1.700 3" stroke="#e08e18" strokeWidth="0.9" fill="none" />
      <path d="M3 21.500c4-.5 6 2 16 1.200" stroke="#e59a1c" strokeWidth="1" fill="none" />
    </svg>
  );
}

function Ticks() {
  return (
    <svg
      role="img"
      aria-label="read"
      viewBox="0 0 20 13"
      className="w-5 h-[13px] mb-1 fill-none stroke-[#53bdeb]"
      strokeWidth="1.8"
      strokeLinecap="round"
    >
      <path d="M1.2 7.8L5.3 11.7L13 1.4" />
      <path d="M8.8 10.2L10.5 11.7L18.600 1.4" />
    </svg>
  );
}

function Avatar({ color }) {
  return (
    <svg viewBox="0 0 35 35" className="w-[35px] h-[35px] shrink-0" aria-hidden="true">
      <circle cx="17.5" cy="17.5" r="17.5" fill={color} />
      <circle cx="17.5" cy="14.5" r="6.4" fill="#fff" />
      <path d="M5.4 29C7.5 25 12 23 17.5 23S27.5 25 29.6 29Q24.5 34.4 17.5 34.4T5.4 29z" fill="#fff" />
    </svg>
  );
}

function Wallpaper() {
  return (
    <svg className="absolute inset-0 w-full h-full" aria-hidden="true">
      <defs>
        <g
          id="doodles"
          fill="none"
          stroke="#162026"
          strokeWidth="4.5"
          strokeLinecap="round"
          strokeLinejoin="round"
        >
          {marks.map(([shape, x, y, scale, turn], index) => (
            <path key={index} d={shapes[shape]} transform={`translate(${x} ${y}) rotate(${turn}) scale(${scale})`} />
          ))}
          {rings.map((value, index) =>
            index % 3 === 0 ? <circle key={index} cx={value} cy={rings[index + 1]} r={rings[index + 2]} /> : null
          )}
          {letters.map(({ text, x, y, turn, size }) => (
            <text
              key={text}
              transform={`translate(${x} ${y}) rotate(${turn})`}
              fontSize={size}
              fontWeight="700"
              strokeWidth="4"
            >
              {text}
            </text>
          ))}
        </g>
        <pattern id="wallpaper" width="675" height="784" patternUnits="userSpaceOnUse">
          <g transform="scale(0.33333)">
            <use href="#doodles" />
            <use href="#doodles" x="-2025" />
            <use href="#doodles" x="2025" />
          </g>
        </pattern>
      </defs>
      <rect width="100%" height="100%" fill="url(#wallpaper)" />
    </svg>
  );
}

function Bubble({ message, mine, name, color, tail }) {
  return (
    <div
      className={`relative max-w-[65%] rounded-[9px] pl-3 pr-[10px] pt-2 pb-[9px] ${
        mine ? "bg-[#005c4b]" : "bg-[#202c33]"
      } ${tail ? (mine ? "rounded-tr-none" : "rounded-tl-none") : ""} ${message.long ? "w-[65%]" : ""}`}
    >
      {tail && mine && (
        <svg viewBox="0 0 8 13" className="absolute top-0 left-full w-[10px] h-4 fill-[#005c4b]" aria-hidden="true">
          <path d="M5.188 0H0v11.193l6.467-8.625C7.526 1.156 6.958 0 5.188 0z" />
        </svg>
      )}
      {tail && !mine && (
        <svg viewBox="0 0 8 13" className="absolute top-0 right-full w-[10px] h-4 fill-[#202c33]" aria-hidden="true">
          <path d="M1.533 2.568L8 11.193V0H2.812C1.042 0 .474 1.156 1.533 2.568z" />
        </svg>
      )}
      {name && (
        <h2 className="pb-[2px] text-[15px] leading-[26px] font-semibold" style={{ color }}>
          {name}
        </h2>
      )}
      <div className="flex items-end justify-between gap-[10px]">
        <p className="text-[17px] leading-6 text-[#e9edef] whitespace-nowrap">{message.text}</p>
        <div
          className={`flex items-center gap-1 h-4 -mb-[5px] text-[13px] text-white/60 whitespace-nowrap ${
            message.long ? "absolute bottom-[9px] right-[10px]" : ""
          }`}
        >
          <time>{message.time}</time>
          {mine && <Ticks />}
        </div>
      </div>
    </div>
  );
}

export default function App() {
  const [atBottom, setAtBottom] = useState(false);

  return (
    <main className="relative min-h-screen overflow-hidden bg-[#0b141a] font-['Open_Sans',sans-serif]">
      <Wallpaper />
      <div className="relative flex flex-col gap-[15px] pl-[39px] pr-[68px] pb-2">
        <div className="flex justify-center -mr-[29px]">
          <span className="h-[31px] px-[15px] rounded-b-[9px] bg-[#182229] text-[15px] leading-5 text-[#8696a0]">
            30/11/2022
          </span>
        </div>
        {groups.map((group, index) => (
          <section key={index} className="flex gap-3">
            {group.mine ? <div className="w-[35px] shrink-0" /> : <Avatar color={group.color} />}
            <div className={`flex flex-1 flex-col gap-[3px] ${group.mine ? "items-end" : "items-start"}`}>
              {group.messages.map((message, i) => (
                <Bubble
                  key={i}
                  message={message}
                  mine={group.mine}
                  name={group.name}
                  color={group.color}
                  tail={i === 0}
                />
              ))}
            </div>
          </section>
        ))}
      </div>
      {!atBottom && (
        <button
          type="button"
          aria-label="Scroll to bottom"
          onClick={() => setAtBottom(true)}
          className="fixed bottom-[9px] right-[3px] flex items-center justify-center w-[53px] h-[53px] rounded-full bg-[#202c33]"
        >
          <svg viewBox="0 0 20 12" className="w-5 h-3 fill-none stroke-[#858d92]" strokeWidth="2.6">
            <path d="M2 2L10 10L18 2" />
          </svg>
        </button>
      )}
    </main>
  );
}
